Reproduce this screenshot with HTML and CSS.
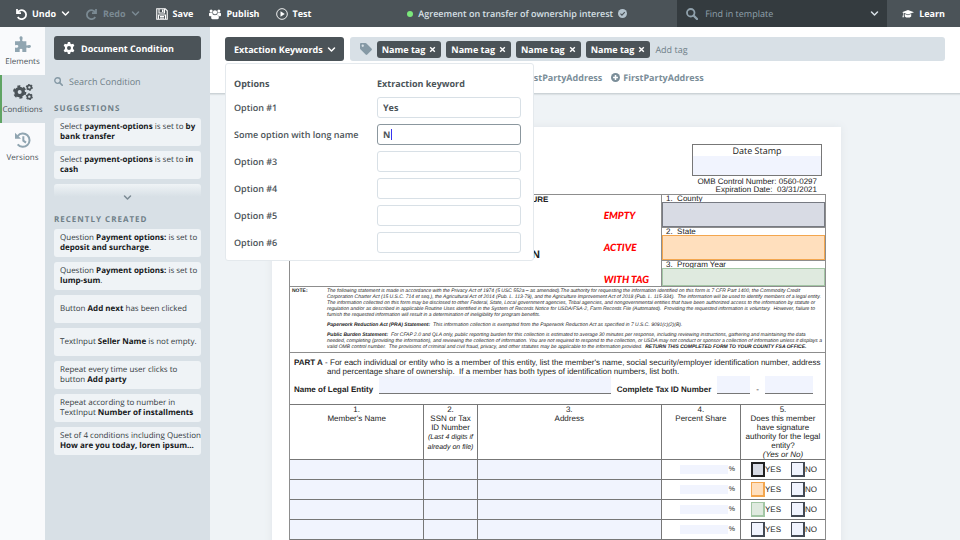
FILE: index.html
```html
<!DOCTYPE html>
<html lang="en">
<head>
    <meta charset="UTF-8">
    <meta name="viewport" content="width=device-width, initial-scale=1.0">
    <title>Agreement on transfer of ownership interest</title>
    <link rel="stylesheet" href="styles.css">
</head>
<body>

<!-- Icon sprite -->
<svg class="sprite" aria-hidden="true">
    <symbol id="i-undo" viewBox="0 0 24 24"><path d="M4 2v8h8M5 9.500A9 9 0 1 1 5.500 18" fill="none" stroke="currentColor" stroke-width="3.500"/></symbol>
    <symbol id="i-redo" viewBox="0 0 24 24"><path d="M20 2v8h-8M19 9.500A9 9 0 1 0 18.500 18" fill="none" stroke="currentColor" stroke-width="3.500"/></symbol>
    <symbol id="i-chevron" viewBox="0 0 12 12"><path d="M2 4l4 4 4-4" fill="none" stroke="currentColor" stroke-width="2" stroke-linecap="round" stroke-linejoin="round"/></symbol>
    <symbol id="i-save" viewBox="0 0 24 24"><path d="M1.500 1.500h17l4 4v17h-21zM6 2v8h11V2M5 22v-8h14v8M8 17h8M8 20h8" fill="none" stroke="currentColor" stroke-width="2.200"/><path d="M12 3h3v5h-3z" fill="currentColor"/></symbol>
    <symbol id="i-users" viewBox="0 0 28 24"><g fill="currentColor"><circle cx="5" cy="5" r="3.500"/><circle cx="23" cy="5" r="3.500"/><circle cx="14" cy="8" r="5"/><path d="M0 15V11q0-2 3-2h5q0 4 2 5-3 1-4 3H2q-2 0-2-2zM28 15V11q0-2-3-2h-5q0 4-2 5 3 1 4 3h4q2 0 2-2zM5 21q0-7 5-7 4 2 8 0 5 0 5 7 0 3-3 3H8q-3 0-3-3z"/></g></symbol>
    <symbol id="i-play" viewBox="0 0 24 24"><circle cx="12" cy="12" r="10.700" fill="none" stroke="currentColor" stroke-width="1.800"/><path d="M9 6.500l8.500 5.500L9 17.500z" fill="currentColor"/></symbol>
    <symbol id="i-check" viewBox="0 0 24 24"><circle cx="12" cy="12" r="12" fill="currentColor"/><path d="M6.500 12.500l4 4 7.500-8" fill="none" stroke="#4b5358" stroke-width="3"/></symbol>
    <symbol id="i-search" viewBox="0 0 24 24"><circle cx="9.500" cy="9.500" r="7.500" fill="none" stroke="currentColor" stroke-width="3.600"/><path d="M15 15l7 7" stroke="currentColor" stroke-width="4.500" stroke-linecap="round"/></symbol>
    <symbol id="i-learn" viewBox="0 0 30 24"><path d="M15 2l15 5.500L15 13 4 9v5l1 6H1l1.500-6V8.500L0 7.500zM7 12l8 3 8-3v6q-3 3-8 3t-8-3z" fill="currentColor"/></symbol>
    <symbol id="i-puzzle" viewBox="0 0 24 24"><path d="M0 8h6.500q2-.5 1-2.500Q5.500 1 9 .5 12.500 1 11 5.500q-1 2 1 2.500h5v5q0 2 2 1 4.500-1.500 5 1.500-.5 3.500-5 2-2-1-2 1V24h-5q-2 0-1-2 1-3-2-3t-2 3q1 2-1 2H0v-5.500q0-2 2-1 3 .5 3-2t-3-2q-2 1-2-1z" fill="currentColor"/></symbol>
    <symbol id="i-gear" viewBox="0 0 24 24"><path d="M9.800 0h4.400l.8 3.600 2 1.100 3.500-1.100 2.200 3.800-2.700 2.500q.3 2.100 0 4.200l2.700 2.500-2.200 3.800-3.500-1.100-2 1.100-.8 3.600H9.800L9 20.400l-2-1.100-3.500 1.100-2.200-3.800L4 14.100q-.3-2.100 0-4.200L1.300 7.400l2.200-3.800L7 4.700l2-1.100zM12 8a4 4 0 1 0 0 8 4 4 0 0 0 0-8z" fill="currentColor" fill-rule="evenodd"/></symbol>
    <symbol id="i-gears" viewBox="0 0 30 24">
        <g fill="none" stroke="currentColor">
            <circle cx="10" cy="12" r="5.500" stroke-width="5"/>
            <circle cx="10" cy="12" r="8.600" stroke-width="2.800" stroke-dasharray="4.500 4.500"/>
            <circle cx="24.500" cy="5" r="3" stroke-width="2.400"/>
            <circle cx="24.500" cy="5" r="4.500" stroke-width="1.600" stroke-dasharray="2.350 2.350"/>
            <circle cx="24.500" cy="19" r="3" stroke-width="2.400"/>
            <circle cx="24.500" cy="19" r="4.500" stroke-width="1.600" stroke-dasharray="2.350 2.350"/>
        </g>
    </symbol>
    <symbol id="i-history" viewBox="0 0 24 24"><path d="M4 6a10 10 0 1 1 0 12.500M12.500 6.500V13l4 3" fill="none" stroke="currentColor" stroke-width="3"/><path d="M0 1l9 9H0z" fill="currentColor"/></symbol>
    <symbol id="i-tag" viewBox="0 0 24 24"><path d="M0 2q0-2 2-2h9q1.200 0 2 .8L23 11q1.800 1.600 0 3.300L14.500 23q-1.600 1.500-3.200 0L.8 12.500Q0 11.800 0 10.500zM5.500 3.200a2.300 2.300 0 1 0 0 4.600 2.300 2.300 0 0 0 0-4.600z" fill="currentColor" fill-rule="evenodd"/></symbol>
    <symbol id="i-close" viewBox="0 0 12 12"><path d="M2 2l8 8M10 2l-8 8" stroke="currentColor" stroke-width="2.400"/></symbol>
    <symbol id="i-plus" viewBox="0 0 24 24"><circle cx="12" cy="12" r="12" fill="currentColor"/><path d="M12 5.500v13M5.500 12h13" stroke="#fff" stroke-width="4"/></symbol>
</svg>

<header class="topbar">
    <div class="actions">
        <button class="action" type="button"><svg class="icon"><use href="#i-undo"/></svg>Undo<svg class="chevron"><use href="#i-chevron"/></svg></button>
        <button class="action" type="button" disabled><svg class="icon"><use href="#i-redo"/></svg>Redo<svg class="chevron"><use href="#i-chevron"/></svg></button>
        <button class="action" type="button"><svg class="icon"><use href="#i-save"/></svg>Save</button>
        <button class="action" type="button"><svg class="icon"><use href="#i-users"/></svg>Publish</button>
        <button class="action" type="button"><svg class="icon"><use href="#i-play"/></svg>Test</button>
    </div>
    <h1 class="doc-title"><span class="dot"></span>Agreement on transfer of ownership interest<svg class="icon-sm"><use href="#i-check"/></svg></h1>
    <div class="find">
        <svg class="icon"><use href="#i-search"/></svg>
        <input type="text" placeholder="Find in template" aria-label="Find in template">
        <svg class="chevron"><use href="#i-chevron"/></svg>
    </div>
    <a class="learn" href="#learn"><svg class="icon"><use href="#i-learn"/></svg>Learn</a>
</header>

<div class="workspace">
    <nav class="rail">
        <a href="#elements"><svg><use href="#i-puzzle"/></svg>Elements</a>
        <a href="#conditions" class="active"><svg><use href="#i-gears"/></svg>Conditions</a>
        <a href="#versions"><svg><use href="#i-history"/></svg>Versions</a>
    </nav>

    <aside class="sidebar">
        <button class="dark-btn" type="button"><svg class="icon"><use href="#i-gear"/></svg>Document Condition</button>
        <div class="search">
            <svg class="icon-sm"><use href="#i-search"/></svg>
            <input type="text" placeholder="Search Condition" aria-label="Search Condition">
        </div>

        <h2>Suggestions</h2>
        <ul class="cards">
            <li>Select <b>payment-options</b> is set to <b>by<br>bank transfer</b></li>
            <li>Select <b>payment-options</b> is set to <b>in<br>cash</b></li>
        </ul>
        <button class="more" type="button" aria-label="Show more"><svg class="chevron"><use href="#i-chevron"/></svg></button>

        <h2>Recently created</h2>
        <ul class="cards">
            <li>Question <b>Payment options:</b> is set to<br><b>deposit and surcharge</b>.</li>
            <li>Question <b>Payment options:</b> is set to<br><b>lump-sum</b>.</li>
            <li>Button <b>Add next</b> has been clicked</li>
            <li>TextInput <b>Seller Name</b> is not empty.</li>
            <li>Repeat every time user clicks to<br>button <b>Add party</b></li>
            <li>Repeat according to number in<br>TextInput <b>Number of installments</b></li>
            <li>Set of 4 conditions including Question<br><b>How are you today, loren ipsum...</b></li>
        </ul>
    </aside>

    <main>
        <section class="toolbar">
            <div class="toolbar-row">
                <div class="dropdown">
                    <button class="dark-btn" type="button" aria-expanded="true">Extaction Keywords<svg class="chevron"><use href="#i-chevron"/></svg></button>
                    <div class="popover">
                        <strong>Options</strong><strong>Extraction keyword</strong>
                        <label for="opt1">Option #1</label><div class="field"><input type="text" id="opt1" value="Yes"></div>
                        <label for="opt2">Some option with long name</label><div class="field focused"><input type="text" id="opt2" value="N"><span class="caret"></span></div>
                        <label for="opt3">Option #3</label><div class="field"><input type="text" id="opt3"></div>
                        <label for="opt4">Option #4</label><div class="field"><input type="text" id="opt4"></div>
                        <label for="opt5">Option #5</label><div class="field"><input type="text" id="opt5"></div>
                        <label for="opt6">Option #6</label><div class="field"><input type="text" id="opt6"></div>
                    </div>
                </div>
                <div class="tagbar">
                    <svg class="icon"><use href="#i-tag"/></svg>
                    <span class="tag">Name tag<button type="button" aria-label="Remove tag"><svg><use href="#i-close"/></svg></button></span>
                    <span class="tag">Name tag<button type="button" aria-label="Remove tag"><svg><use href="#i-close"/></svg></button></span>
                    <span class="tag">Name tag<button type="button" aria-label="Remove tag"><svg><use href="#i-close"/></svg></button></span>
                    <span class="tag">Name tag<button type="button" aria-label="Remove tag"><svg><use href="#i-close"/></svg></button></span>
                    <input type="text" placeholder="Add tag" aria-label="Add tag">
                </div>
            </div>
            <div class="suggested">
                <button type="button"><svg class="icon-sm"><use href="#i-plus"/></svg>FirstPartyAddress</button>
                <button type="button"><svg class="icon-sm"><use href="#i-plus"/></svg>FirstPartyAddress</button>
            </div>
        </section>

        <section class="canvas">
            <article class="paper">
                <div class="stamp">
                    <label for="stamp">Date Stamp</label>
                    <input type="text" id="stamp">
                </div>
                <p class="omb">OMB Control Number: 0560-0297<br>Expiration Date:&nbsp; 03/31/2021</p>

                <div class="form">
                    <div class="form-head">
                        <div class="form-title">
                            <span>U.S. DEPARTMENT OF AGRICULTURE</span>
                            <strong>MEMBER INFORMATION</strong>
                        </div>
                        <div class="marks"><span>EMPTY</span><span>ACTIVE</span><span>WITH TAG</span></div>
                        <div class="boxes">
                            <div class="box"><label for="county">1.&nbsp; County</label><input class="empty" type="text" id="county"></div>
                            <div class="box"><label for="state">2.&nbsp; State</label><input class="active" type="text" id="state"></div>
                            <div class="box"><label for="year">3.&nbsp; Program Year</label><input class="tagged" type="text" id="year"></div>
                        </div>
                    </div>

                    <div class="note">
                        <b>NOTE:</b>
                        <div>
                            <p>The following statement is made in accordance with the Privacy Act of 1974 (5 USC 552a – as amended).The authority for requesting the information identified on this form is 7 CFR Part 1400, the Commodity Credit Corporation Charter Act
                            (15 U.S.C. 714 et seq.), the Agricultural Act of 2014 (Pub. L. 113-79), and the Agriculture Improvement Act of 2018 (Pub. L. 115-334).&nbsp; The information will be used to identify members of a legal entity.&nbsp; The information collected on this form
                            may be disclosed to other Federal, State, Local government agencies, Tribal agencies, and nongovernmental entities that have been authorized access to the information by statute or regulation and/or as described in applicable Routine
                            Uses identified in the System of Records Notice for USDA/FSA-2, Farm Records File (Automated).&nbsp; Providing the requested information is voluntary.&nbsp; However, failure to furnish the requested information will result in a determination of
                            ineligibility for program benefits.</p>
                            <p><b>Paperwork Reduction Act (PRA) Statement:</b>&nbsp; This information collection is exempted from the Paperwork Reduction Act as specified in 7 U.S.C. 9091(c)(2)(B).</p>
                            <p><b>Public Burden Statement:</b>&nbsp; For CFAP 2.0 and QLA only, public reporting burden for this collection is estimated to average 30 minutes per response, including reviewing instructions, gathering and maintaining the data needed, completing
                            (providing the information), and reviewing the collection of information. You are not required to respond to the collection, or USDA may not conduct or sponsor a collection of information unless it displays a valid OMB control number.&nbsp; The
                            provisions of criminal and civil fraud, privacy, and other statutes may be applicable to the information provided.&nbsp; <b>RETURN THIS COMPLETED FORM TO YOUR COUNTY FSA OFFICE.</b></p>
                        </div>
                    </div>

                    <div class="part">
                        <p><b>PART A</b> - For each individual or entity who is a member of this entity, list the member's name, social security/employer identification number, address<br>and percentage share of ownership.&nbsp; If a member has both types of identification numbers, list both.</p>
                        <div class="entity">
                            <label for="entity">Name of Legal Entity</label>
                            <input class="grow" type="text" id="entity">
                            <label for="tax">Complete Tax ID Number</label>
                            <input class="tax1" type="text" id="tax">
                            <span>-</span>
                            <input class="tax2" type="text" aria-label="Tax ID, second part">
                        </div>
                    </div>

                    <table class="members">
                        <colgroup><col class="c-name"><col class="c-ssn"><col class="c-addr"><col class="c-share"><col class="c-sign"></colgroup>
                        <thead>
                        <tr>
                            <th>1.<br>Member's Name</th>
                            <th>2.<br>SSN or Tax<br>ID Number<br><small>(Last 4 digits if<br>already on file)</small></th>
                            <th>3.<br>Address</th>
                            <th>4.<br>Percent Share</th>
                            <th>5.<br>Does this member<br>have signature<br>authority for the legal<br>entity?<br><i>(Yes or No)</i></th>
                        </tr>
                        </thead>
                        <tbody>
                        <tr>
                            <td><input type="text" aria-label="Name"></td><td><input type="text" aria-label="SSN"></td><td><input type="text" aria-label="Address"></td>
                            <td><label class="share"><input type="text">%</label></td>
                            <td><div class="sign"><label><input class="empty dark" type="checkbox">YES</label><label><input type="checkbox">NO</label></div></td>
                        </tr>
                        <tr>
                            <td><input type="text" aria-label="Name"></td><td><input type="text" aria-label="SSN"></td><td><input type="text" aria-label="Address"></td>
                            <td><label class="share"><input type="text">%</label></td>
                            <td><div class="sign"><label><input class="active" type="checkbox">YES</label><label><input type="checkbox">NO</label></div></td>
                        </tr>
                        <tr>
                            <td><input type="text" aria-label="Name"></td><td><input type="text" aria-label="SSN"></td><td><input type="text" aria-label="Address"></td>
                            <td><label class="share"><input type="text">%</label></td>
                            <td><div class="sign"><label><input class="tagged" type="checkbox">YES</label><label><input type="checkbox">NO</label></div></td>
                        </tr>
                        <tr>
                            <td><input type="text" aria-label="Name"></td><td><input type="text" aria-label="SSN"></td><td><input type="text" aria-label="Address"></td>
                            <td><label class="share"><input type="text">%</label></td>
                            <td><div class="sign"><label><input type="checkbox">YES</label><label><input type="checkbox">NO</label></div></td>
                        </tr>
                        </tbody>
                    </table>
                </div>
            </article>
        </section>
    </main>
</div>

</body>
</html>
```
FILE: styles.css
```css
* {
    box-sizing: border-box;
}

body {
    margin: 0;
    height: 100vh;
    display: flex;
    flex-direction: column;
    overflow: hidden;
    font-family: "Open Sans", "Noto Sans", sans-serif;
    font-size: 9px;
    text-rendering: geometricPrecision;
    color: #4b5358;
    background: #eff3f6;
}

h1, h2, p, ul {
    margin: 0;
    padding: 0;
}

button, input {
    margin: 0;
    padding: 0;
    border: 0;
    border-radius: 0;
    background: none;
    font: inherit;
    text-rendering: inherit;
    color: inherit;
    min-width: 0;
    outline: none;
}

button {
    cursor: pointer;
}

a {
    color: inherit;
    text-decoration: none;
}

.sprite {
    display: none;
}

.icon {
    width: 12px;
    height: 12px;
    flex: none;
}

.icon-sm {
    width: 9px;
    height: 9px;
    flex: none;
}

.chevron {
    width: 9px;
    height: 9px;
    flex: none;
}

/* Top bar */
.topbar {
    flex: none;
    height: 27px;
    display: flex;
    align-items: center;
    background: #4b5358;
    color: #fff;
}

.actions {
    display: flex;
    gap: 16px;
    padding-left: 15px;
}

.action {
    display: flex;
    align-items: center;
    gap: 5px;
    font-weight: 700;
}

.action:disabled {
    color: #7b8a93;
}

.doc-title {
    display: flex;
    align-items: center;
    gap: 5px;
    margin: 0 50px 0 auto;
    font-size: 9px;
    font-weight: 600;
    color: #d8e0e6;
    white-space: nowrap;
}

.doc-title .icon-sm {
    color: #b4c3cd;
}

.dot {
    width: 6px;
    height: 6px;
    border-radius: 50%;
    background: #7be87b;
}

.find {
    width: 210px;
    align-self: stretch;
    display: flex;
    align-items: center;
    gap: 7px;
    padding: 0 8px 0 9px;
    background: #343b3f;
    color: #90a1ac;
}

.find input {
    flex: 1;
}

.find .chevron {
    color: #d8e0e6;
}

::placeholder {
    color: inherit;
    opacity: 1;
}

.learn {
    display: flex;
    align-items: center;
    gap: 5px;
    padding: 0 15px;
    font-weight: 700;
}

.workspace {
    flex: 1;
    min-height: 0;
    display: flex;
}

/* Left rail */
.rail {
    flex: none;
    width: 45px;
    background: #f9fafc;
}

.rail a {
    height: 48px;
    display: flex;
    flex-direction: column;
    align-items: center;
    gap: 4px;
    padding-top: 9px;
    font-size: 8px;
    line-height: 12px;
    border-left: 2px solid transparent;
    border-right: 2px solid transparent;
}

.rail svg {
    width: 20px;
    height: 16px;
    color: #90a5b1;
}

.rail .active {
    background: #d8e0e6;
    border-left-color: #5fa463;
    border-right-color: #d8e0e6;
}

.rail .active svg {
    color: #4b5358;
}

/* Conditions sidebar */
.sidebar {
    flex: none;
    width: 165px;
    padding: 9px;
    background: #d8e0e6;
}

.dark-btn {
    height: 24px;
    display: flex;
    align-items: center;
    gap: 4px;
    padding: 0 8px 0 9px;
    border-radius: 3px;
    background: #4b5358;
    color: #fff;
    font-weight: 700;
    white-space: nowrap;
}

.sidebar .dark-btn {
    width: 100%;
    gap: 6px;
}

.search {
    display: flex;
    align-items: center;
    gap: 6px;
    height: 14px;
    margin: 14px 0 13px;
    color: #6f7f88;
}

.search .icon-sm {
    color: #8599a5;
}

.search input {
    flex: 1;
}

.sidebar h2 {
    margin-bottom: 2px;
    font-size: 8px;
    line-height: 15px;
    font-weight: 700;
    letter-spacing: 1px;
    text-transform: uppercase;
    color: #6f7f88;
}

.cards {
    display: grid;
    gap: 5px;
    list-style: none;
}

.cards li {
    height: 28px;
    display: block;
    align-content: center;
    padding: 0 6px;
    border-radius: 3px;
    background: #eff3f6;
    font-size: 8px;
    line-height: 10px;
    white-space: nowrap;
    overflow: hidden;
    color: #343b3f;
}

.cards b {
    color: #16191b;
}

.more {
    width: 100%;
    height: 18px;
    margin: 5px 0 10px;
    display: flex;
    align-items: flex-end;
    justify-content: center;
    border-radius: 3px;
    background: linear-gradient(#eff3f6, #d8e0e6 70%);
    color: #7b8a93;
}

/* Toolbar */
main {
    flex: 1;
    min-width: 0;
    display: flex;
    flex-direction: column;
}

.toolbar {
    flex: none;
    height: 67px;
    padding: 10px 15px 0;
    background: #fff;
    border-bottom: 1px solid #ccd3d7;
    box-shadow: 0 1px 1px #dde2e5;
}

.toolbar-row {
    display: flex;
    gap: 6px;
}

.dropdown {
    position: relative;
}

.popover {
    position: absolute;
    z-index: 2;
    top: 26px;
    left: 0;
    width: 309px;
    display: grid;
    grid-template-columns: 1fr 144px;
    gap: 6px 0;
    align-items: center;
    padding: 12px 12px 7px 8px;
    border: 1px solid #e4e9ed;
    border-radius: 3px;
    background: #fff;
    line-height: 15px;
    font-weight: 600;
}

.popover strong {
    font-weight: 700;
}

.field {
    position: relative;
    height: 21px;
    border: 1px solid #d8e0e6;
    border-radius: 3px;
}

.field input {
    width: 100%;
    height: 19px;
    padding: 0 5px;
    display: block;
    font-weight: 700;
}

.focused {
    border-color: #8b979e;
}

.caret {
    position: absolute;
    top: 4px;
    left: 13px;
    width: 1px;
    height: 11px;
    background: #3a34f0;
}

.tagbar {
    flex: 1;
    min-width: 0;
    display: flex;
    align-items: center;
    gap: 5px;
    padding: 0 10px;
    border-radius: 3px;
    background: #d8e0e6;
    color: #6f7f88;
}

.tagbar .icon {
    color: #8599a5;
}

.tagbar input {
    flex: 1;
}

.tag {
    height: 17px;
    display: flex;
    align-items: center;
    gap: 4px;
    padding: 0 5px;
    border-radius: 3px;
    background: #4b5358;
    color: #fff;
    font-weight: 700;
    white-space: nowrap;
}

.tag button {
    display: flex;
}

.tag svg {
    width: 7px;
    height: 7px;
}

.suggested {
    display: flex;
    gap: 9px;
    padding: 10px 0 0 285px;
    font-weight: 700;
    color: #7b8e99;
}

.suggested button {
    display: flex;
    align-items: center;
    gap: 3px;
}

/* Document */
.canvas {
    flex: 1;
    min-height: 0;
    overflow: hidden;
    padding: 33px 119px 0 62px;
}

.paper {
    min-height: 100%;
    padding: 17px 15px 17px 17px;
    background: #fff;
    box-shadow: 0 0 8px #e0e5e9;
    font-family: "Liberation Sans", Arial, sans-serif;
    font-size: 8px;
    line-height: 9px;
    color: #222;
}

.paper input {
    background: #f1f4fe;
}

.stamp {
    width: 130px;
    height: 32px;
    margin: 0 4px 0 auto;
    display: flex;
    flex-direction: column;
    border: 1px solid #777;
    text-align: center;
    font-family: "Open Sans", sans-serif;
    font-size: 9px;
    line-height: 11px;
}

.stamp input {
    flex: 1;
    width: 100%;
}

.omb {
    margin: 2px 9px 0 0;
    text-align: right;
    line-height: 8px;
}

.form {
    border: 1px solid #8d8d8d;
    border-bottom: 0;
}

.form-head {
    display: grid;
    grid-template-columns: 1fr 164px;
}

.form-title, .marks {
    grid-area: 1 / 1;
    display: flex;
    flex-direction: column;
    justify-content: space-between;
}

.form-title {
    align-items: center;
    padding: 0 0 25px;
    font-weight: 700;
    font-size: 8px;
}

.form-title strong {
    font-size: 11px;
    line-height: 12px;
}

.marks {
    justify-self: end;
    padding: 15px 12px 0 0;
    font: italic 900 10px/12px Lato, sans-serif;
    color: #f00;
}

.boxes {
    border-left: 1px solid #8d8d8d;
}

.box {
    height: 33px;
    display: flex;
    flex-direction: column;
    border-bottom: 1px solid #8d8d8d;
}

.box:last-child {
    height: 25px;
    border-bottom: 0;
}

.box label {
    padding-left: 4px;
    line-height: 7px;
}

.box input {
    flex: 1;
    width: 100%;
    border: 1px solid;
}

.paper .empty {
    background: #d8dbe4;
    border-color: #777a82;
}

.paper .active {
    background: #ffdfbd;
    border-color: #f3a64e;
}

.paper .tagged {
    background: #dfeadf;
    border-color: #a3c6a5;
}

.paper .dark {
    border: 2px solid #222;
}

.note {
    display: grid;
    grid-template-columns: 35px 1fr;
    padding: 1px 1px 2px 2px;
    border-top: 1px solid #8d8d8d;
    border-bottom: 1px solid #8d8d8d;
    font-size: 5px;
    line-height: 6px;
}

.note div {
    display: grid;
    gap: 4px;
    font-style: italic;
}

.part {
    padding: 5px 12px 10px 4px;
}

.part p {
    padding-left: 33px;
    text-indent: -33px;
    white-space: nowrap;
}

.entity {
    display: flex;
    align-items: flex-end;
    gap: 6px;
    white-space: nowrap;
}

.entity label {
    font-weight: 700;
}

.entity input {
    height: 18px;
    border-bottom: 1px solid #777;
}

.entity .grow {
    flex: 1;
}

.entity .tax1 {
    width: 33px;
}

.entity .tax2 {
    width: 48px;
}

/* Members table */
.members {
    width: 100%;
    table-layout: fixed;
    border-collapse: collapse;
}

.c-name {
    width: 25%;
}

.c-ssn {
    width: 10%;
}

.c-addr {
    width: 34.4%;
}

.c-share {
    width: 14.8%;
}

.c-sign {
    width: 15.8%;
}

.members th, .members td {
    padding: 0;
    border: 1px solid #777;
    border-left: 0;
}

.members thead th {
    border-top: 1px solid #777;
}

.members th:last-child, .members td:last-child {
    border-right: 0;
}

.members th {
    vertical-align: top;
    font-weight: 400;
}

.members small {
    font-size: 7px;
    line-height: 8px;
    font-style: italic;
}

.members td > input {
    display: block;
    width: 100%;
    height: 19px;
}

.share {
    display: flex;
    align-items: center;
    justify-content: flex-end;
    gap: 1px;
    padding-right: 5px;
    font-size: 7px;
}

.share input {
    width: 48px;
    height: 9px;
}

.sign {
    display: flex;
    justify-content: space-between;
    padding: 0 8px 0 10px;
}

.sign label {
    display: flex;
    align-items: center;
}

.sign input {
    appearance: none;
    width: 14px;
    height: 15px;
    border: 1px solid #444a55;
    border-width: 1px 2px 2px 1px;
}
```
